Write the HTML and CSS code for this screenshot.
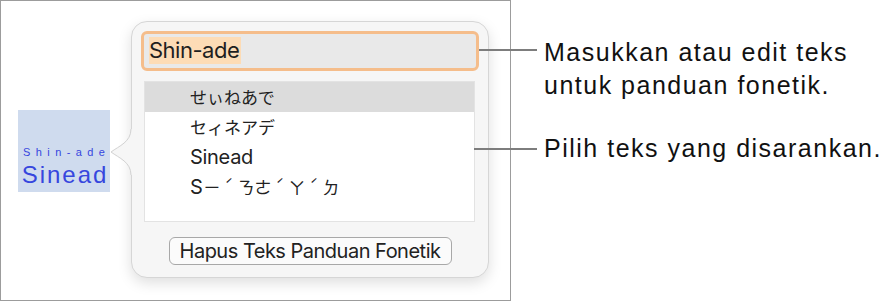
FILE: index.html
```html
<!DOCTYPE html>
<html lang="id">
<head>
<meta charset="utf-8">
<title>Panduan Fonetik</title>
<link rel="stylesheet" href="styles.css">
</head>
<body>
<div class="figure">
  <div class="stage">
    <div class="word">
      <div class="ruby">Shin-ade</div>
      <div class="base">Sinead</div>
    </div>
    <div class="popover">
      <svg class="arrow" width="23" height="46" viewBox="0 0 23 46" aria-hidden="true">
        <path class="arrow-fill" d="M23,0 L21,0 C21,13 9,17 1,23 C9,29 21,33 21,46 L23,46 Z"/>
        <path class="arrow-stroke" d="M21,0 C21,13 9,17 1,23 C9,29 21,33 21,46"/>
      </svg>
      <div class="field"><span class="sel">Shin-ade</span></div>
      <ul class="list">
        <li class="row selected kana">せぃねあで</li>
        <li class="row kana">セィネアデ</li>
        <li class="row">Sinead</li>
        <li class="row"><span class="latin">S</span><span class="kana">ㄧ<span class="tone">ˊ</span>ㄋㄜ<span class="tone">ˊ</span>ㄚ<span class="tone">ˊ</span>ㄉ</span></li>
      </ul>
      <button class="clear" type="button">Hapus Teks Panduan Fonetik</button>
    </div>
  </div>
  <div class="notes">
    <p class="note note-1">Masukkan atau edit teks<br>untuk panduan fonetik.</p>
    <p class="note note-2">Pilih teks yang disarankan.</p>
  </div>
</div>
</body>
</html>
```
FILE: styles.css
```css
html, body {
  margin: 0;
  padding: 0;
  background: #ffffff;
}

body {
  font-family: "Inter", "Liberation Sans", "Noto Sans CJK JP", sans-serif;
  color: #1d1d1d;
}

.figure {
  display: flex;
  width: 894px;
  height: 301px;
}

.stage {
  box-sizing: border-box;
  width: 511px;
  height: 301px;
  border: 1.5px solid #9c9c9c;
  display: flex;
  align-items: center;
  padding-left: 17px;
  gap: 21px;
  flex-shrink: 0;
}

.word {
  width: 92px;
  height: 82px;
  background: #cfdbee;
  color: #3646de;
  display: flex;
  flex-direction: column;
  align-items: center;
  justify-content: flex-end;
  padding-bottom: 2px;
  box-sizing: border-box;
  font-family: "Liberation Sans", sans-serif;
}

.ruby {
  font-size: 11px;
  letter-spacing: 5.4px;
  margin-right: -5.4px;
  line-height: 14px;
}

.base {
  font-size: 24px;
  letter-spacing: 2px;
  margin-right: -2px;
  line-height: 31px;
}

.popover {
  position: relative;
  box-sizing: border-box;
  width: 358px;
  height: 257px;
  margin-top: -2px;
  background: #f6f6f6;
  border: 1px solid #d6d6d6;
  border-radius: 16px;
  box-shadow: 0 5px 14px rgba(0, 0, 0, 0.13);
  padding: 9px 9px 12px;
  display: flex;
  flex-direction: column;
}

.arrow {
  position: absolute;
  left: -22px;
  top: 107px;
  overflow: visible;
}

.arrow-fill {
  fill: #f6f6f6;
}

.arrow-stroke {
  fill: none;
  stroke: #d2d2d2;
  stroke-width: 1;
}

.field {
  box-sizing: border-box;
  height: 40px;
  border: 3px solid #f5bd8b;
  border-radius: 6px;
  background: #e9e9e9;
  display: flex;
  align-items: center;
  padding-left: 5px;
}

.sel {
  background: #fddcb6;
  font-size: 22px;
  letter-spacing: -0.5px;
  line-height: 27px;
  color: #1f1f1f;
  padding-right: 2px;
}

.list {
  list-style: none;
  margin: 10px 4px 0 3px;
  padding: 0;
  box-sizing: border-box;
  height: 142px;
  background: #ffffff;
  border: 1px solid #e3e3e3;
}

.row {
  height: 30px;
  line-height: 30px;
  padding-left: 45px;
  font-size: 20px;
  letter-spacing: -0.3px;
  color: #222222;
  white-space: nowrap;
}

.kana {
  font-family: "Noto Sans CJK JP", sans-serif;
  font-size: 17px;
  letter-spacing: 0;
}

.latin {
  font-family: "Inter", sans-serif;
  font-size: 20px;
  margin-right: 1px;
}

.tone {
  display: inline-block;
  width: 17px;
  text-align: center;
  font-size: 14px;
  line-height: 14px;
  vertical-align: 4px;
}

.row.selected {
  background: #dcdcdc;
}

.clear {
  align-self: center;
  margin-top: 15px;
  box-sizing: border-box;
  width: 283px;
  height: 28px;
  border: 1px solid #a8a8a8;
  border-radius: 6px;
  background: #fbfbfb;
  font-family: "Inter", "Liberation Sans", sans-serif;
  font-size: 20px;
  letter-spacing: -0.5px;
  color: #222222;
  padding: 0;
  line-height: 26px;
}

.notes {
  margin-left: 33px;
  padding-top: 36px;
}

.note {
  position: relative;
  margin: 0;
  font-family: "Liberation Sans", sans-serif;
  font-size: 25px;
  letter-spacing: 1.5px;
  line-height: 33px;
  color: #111111;
  white-space: nowrap;
}

.note-2 {
  margin-top: 30px;
}

.note::before {
  content: "";
  position: absolute;
  right: 100%;
  margin-right: 7px;
  height: 2px;
  background: #7d7d7d;
}

.note-1::before {
  top: 13px;
  width: 58px;
}

.note-2::before {
  top: 16px;
  width: 63px;
}
```
